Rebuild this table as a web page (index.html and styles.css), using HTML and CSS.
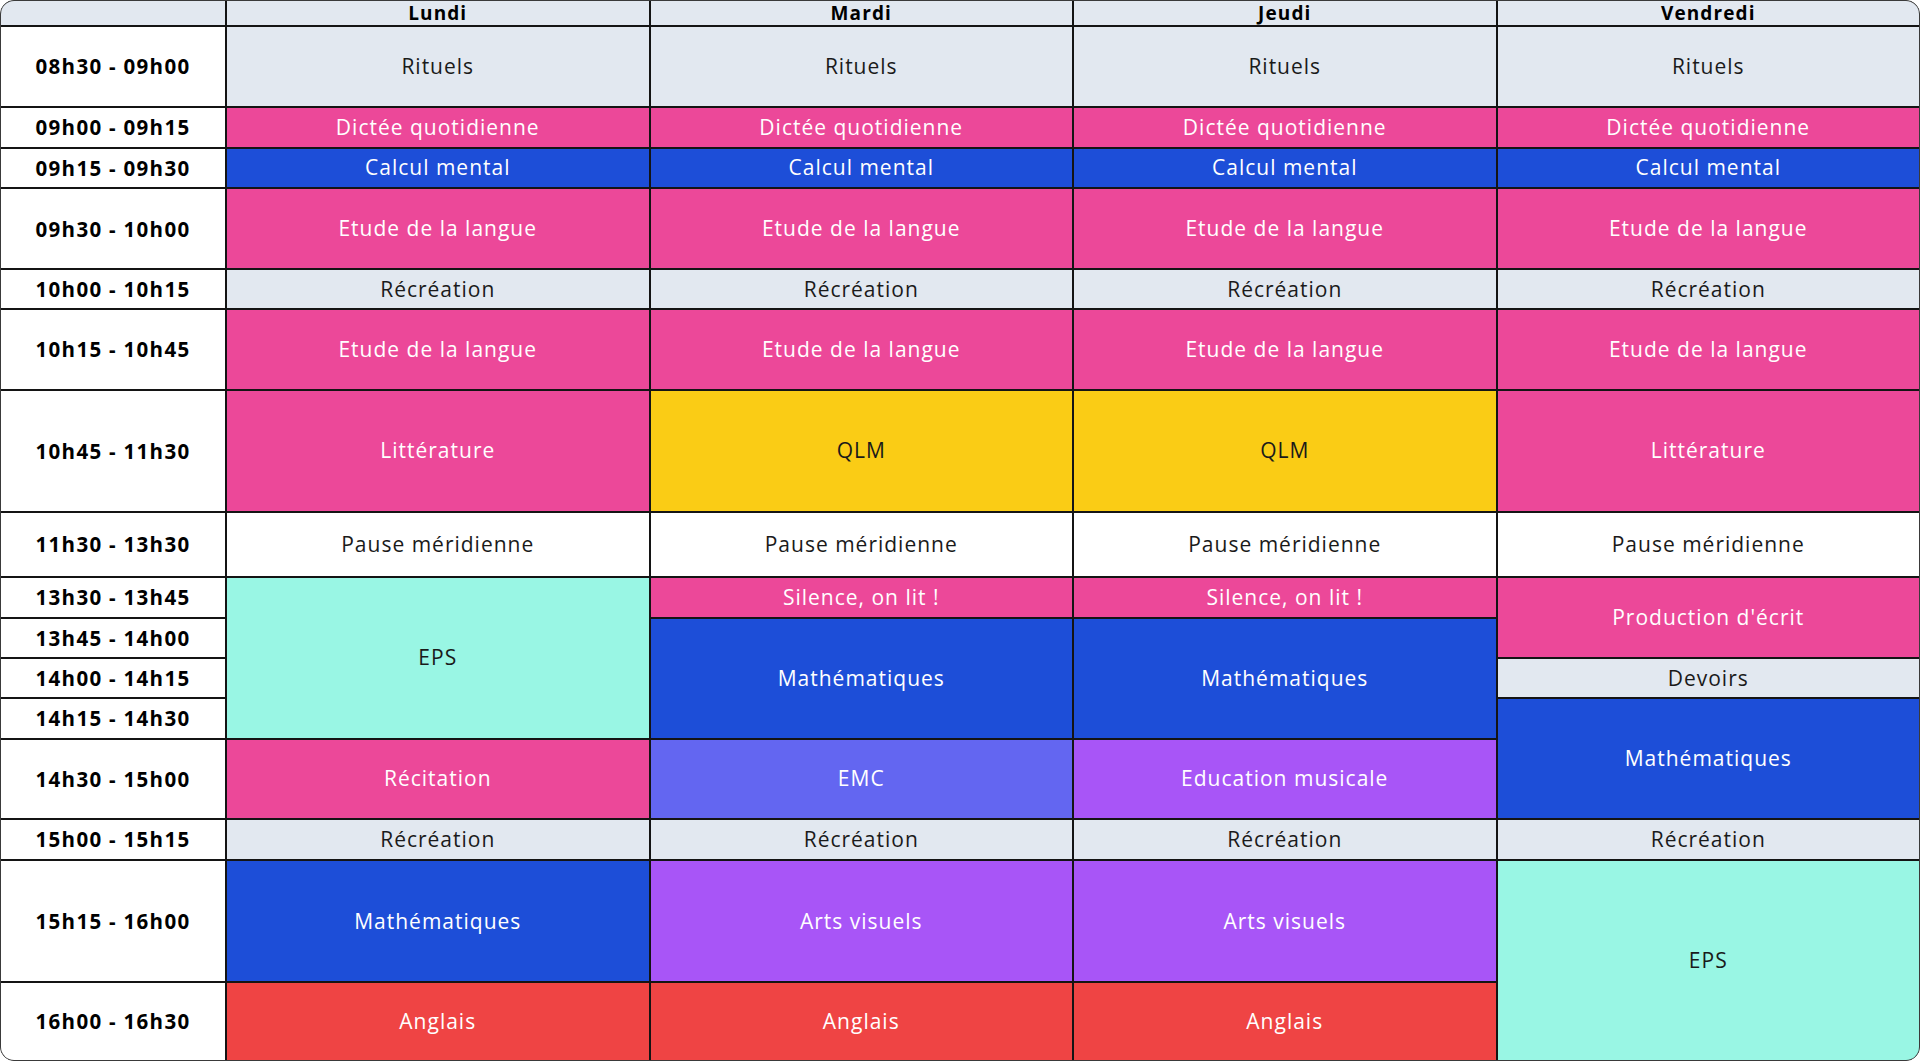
FILE: index.html
```html
<!DOCTYPE html>
<html lang="fr">
<head>
<meta charset="utf-8">
<title>Emploi du temps</title>
<link rel="stylesheet" href="styles.css">
</head>
<body>
<div class="timetable">
  <div class="cell head corner"></div>
  <div class="cell head">Lundi</div>
  <div class="cell head">Mardi</div>
  <div class="cell head">Jeudi</div>
  <div class="cell head">Vendredi</div>

  <div class="cell time">08h30 - 09h00</div>
  <div class="cell gray">Rituels</div>
  <div class="cell gray">Rituels</div>
  <div class="cell gray">Rituels</div>
  <div class="cell gray">Rituels</div>

  <div class="cell time">09h00 - 09h15</div>
  <div class="cell pink">Dictée quotidienne</div>
  <div class="cell pink">Dictée quotidienne</div>
  <div class="cell pink">Dictée quotidienne</div>
  <div class="cell pink">Dictée quotidienne</div>

  <div class="cell time">09h15 - 09h30</div>
  <div class="cell blue">Calcul mental</div>
  <div class="cell blue">Calcul mental</div>
  <div class="cell blue">Calcul mental</div>
  <div class="cell blue">Calcul mental</div>

  <div class="cell time">09h30 - 10h00</div>
  <div class="cell pink">Etude de la langue</div>
  <div class="cell pink">Etude de la langue</div>
  <div class="cell pink">Etude de la langue</div>
  <div class="cell pink">Etude de la langue</div>

  <div class="cell time">10h00 - 10h15</div>
  <div class="cell gray">Récréation</div>
  <div class="cell gray">Récréation</div>
  <div class="cell gray">Récréation</div>
  <div class="cell gray">Récréation</div>

  <div class="cell time">10h15 - 10h45</div>
  <div class="cell pink">Etude de la langue</div>
  <div class="cell pink">Etude de la langue</div>
  <div class="cell pink">Etude de la langue</div>
  <div class="cell pink">Etude de la langue</div>

  <div class="cell time">10h45 - 11h30</div>
  <div class="cell pink">Littérature</div>
  <div class="cell yellow">QLM</div>
  <div class="cell yellow">QLM</div>
  <div class="cell pink">Littérature</div>

  <div class="cell time">11h30 - 13h30</div>
  <div class="cell white">Pause méridienne</div>
  <div class="cell white">Pause méridienne</div>
  <div class="cell white">Pause méridienne</div>
  <div class="cell white">Pause méridienne</div>

  <div class="cell time">13h30 - 13h45</div>
  <div class="cell teal span-4">EPS</div>
  <div class="cell pink">Silence, on lit !</div>
  <div class="cell pink">Silence, on lit !</div>
  <div class="cell pink span-2">Production d'écrit</div>

  <div class="cell time">13h45 - 14h00</div>
  <div class="cell blue span-3">Mathématiques</div>
  <div class="cell blue span-3">Mathématiques</div>

  <div class="cell time">14h00 - 14h15</div>
  <div class="cell gray">Devoirs</div>

  <div class="cell time">14h15 - 14h30</div>
  <div class="cell blue span-2">Mathématiques</div>

  <div class="cell time">14h30 - 15h00</div>
  <div class="cell pink">Récitation</div>
  <div class="cell indigo">EMC</div>
  <div class="cell purple">Education musicale</div>

  <div class="cell time">15h00 - 15h15</div>
  <div class="cell gray">Récréation</div>
  <div class="cell gray">Récréation</div>
  <div class="cell gray">Récréation</div>
  <div class="cell gray">Récréation</div>

  <div class="cell time">15h15 - 16h00</div>
  <div class="cell blue">Mathématiques</div>
  <div class="cell purple">Arts visuels</div>
  <div class="cell purple">Arts visuels</div>
  <div class="cell teal span-2">EPS</div>

  <div class="cell time">16h00 - 16h30</div>
  <div class="cell red">Anglais</div>
  <div class="cell red">Anglais</div>
  <div class="cell red">Anglais</div>
</div>
</body>
</html>
```

FILE: styles.css
```css
* { box-sizing: border-box; }
html, body {
  margin: 0;
  padding: 0;
  background: #ffffff;
}
body {
  width: 1920px;
  height: 1061px;
  overflow: hidden;
  font-family: "Open Sans", "Liberation Sans", sans-serif;
}
.timetable {
  width: 1920px;
  height: 1061px;
  display: grid;
  grid-template-columns: 224px 1fr 1fr 1fr 1fr;
  grid-template-rows: 24px 79px 38.7px 38.6px 79px 38px 78.7px 119.7px 63.3px 38.7px 38.3px 38.3px 38.4px 78.6px 39px 119.7px 1fr;
  gap: 2px;
  background: #141414;
  border: 1px solid #3a3a3a;
  border-radius: 14px;
  overflow: hidden;
}
.cell {
  display: flex;
  align-items: center;
  justify-content: center;
  text-align: center;
  font-size: 21px;
  letter-spacing: 1px;
  color: #1a1a1a;
  background: #ffffff;
  line-height: 1.1;
}
.head {
  background: #e2e8f0;
  font-weight: 700;
  font-size: 19px;
  letter-spacing: 1.1px;
  line-height: 22px;
  color: #000;
}
.time {
  background: #ffffff;
  font-weight: 700;
  font-size: 20.5px;
  letter-spacing: 1.3px;
  color: #000;
}
.gray { background: #e2e8f0; }
.white { background: #ffffff; }
.pink { background: #ec4899; color: #fff; }
.blue { background: #1d4ed8; color: #fff; }
.yellow { background: #facc15; }
.teal { background: #99f6e4; }
.indigo { background: #6366f1; color: #fff; }
.purple { background: #a855f7; color: #fff; }
.red { background: #ef4444; color: #fff; }
.span-2 { grid-row: span 2; }
.span-3 { grid-row: span 3; }
.span-4 { grid-row: span 4; }
```
